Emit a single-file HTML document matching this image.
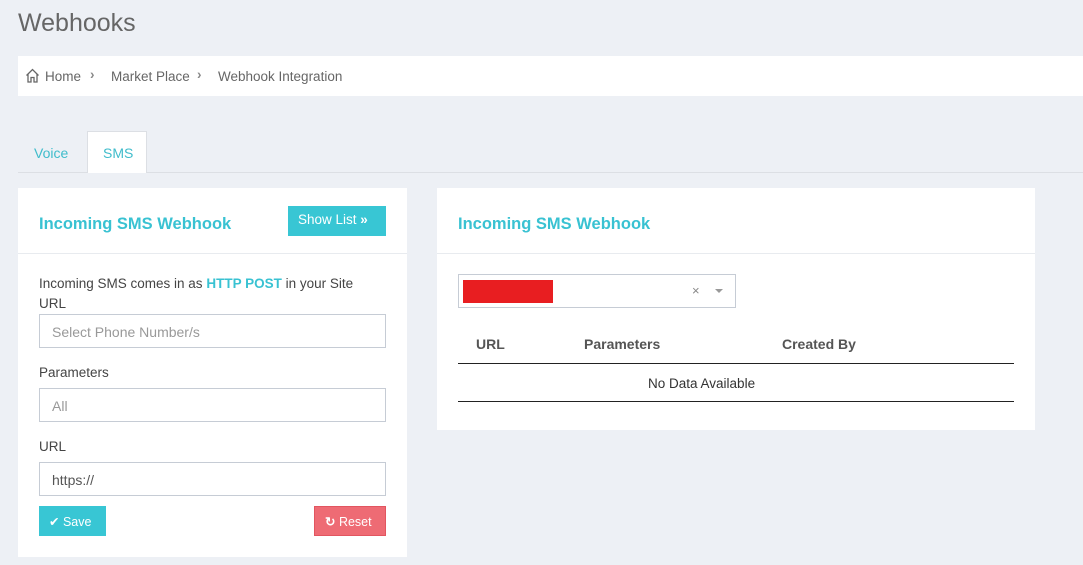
<!DOCTYPE html>
<html><head><style>
*{box-sizing:border-box;margin:0;padding:0}
body{width:1083px;height:565px;background:#edf0f5;font-family:"Liberation Sans",sans-serif;position:relative;overflow:hidden;color:#444}
.a{position:absolute}
.t{font-size:13.5px;color:#444}
.h{font-size:16.5px;font-weight:bold;color:#39c2d2}
.inp{position:absolute;left:39px;width:347px;height:34px;border:1px solid #c6ccd5;background:#fff;font-size:14px;padding:9px 12px;color:#999}
.th{font-size:14px;font-weight:bold;color:#555}
</style></head><body>
<div class="a" style="left:18px;top:9px;font-size:25px;color:#666">Webhooks</div>
<div class="a" style="left:18px;top:56px;width:1065px;height:40px;background:#fff"></div>
<svg class="a" style="left:25px;top:68px" width="15" height="15" viewBox="0 0 15 15"><path d="M1.5 7.5 L7.5 1.5 L13.5 7.5 M3 6 V14 H6 V9.5 H9 V14 H12 V6" fill="none" stroke="#666" stroke-width="1.3"/></svg>
<div class="a t" style="left:45px;top:69px;color:#666">Home</div>
<div class="a t" style="left:90px;top:67px;color:#888;font-weight:bold">›</div>
<div class="a t" style="left:111px;top:69px;color:#666">Market Place</div>
<div class="a t" style="left:197px;top:67px;color:#888;font-weight:bold">›</div>
<div class="a t" style="left:218px;top:69px;color:#666">Webhook Integration</div>
<div class="a" style="left:18px;top:172px;width:1065px;height:1px;background:#dcdfe4"></div>
<div class="a" style="left:87px;top:131px;width:60px;height:42px;background:#fff;border:1px solid #dcdfe4;border-bottom:none"></div>
<div class="a" style="left:34px;top:145px;font-size:14px;color:#3fbccb">Voice</div>
<div class="a" style="left:103px;top:145px;font-size:14px;color:#3fbccb">SMS</div>

<div class="a" style="left:18px;top:188px;width:389px;height:369px;background:#fff"></div>
<div class="a" style="left:18px;top:253px;width:389px;height:1px;background:#e8ebef"></div>
<div class="a h" style="left:39px;top:215px">Incoming SMS Webhook</div>
<div class="a" style="left:288px;top:206px;width:98px;height:30px;background:#38c6d4;color:#fff;font-size:13.5px;padding:6px 0 0 10px">Show List <b>»</b></div>
<div class="a t" style="left:39px;top:276px">Incoming SMS comes in as <b style="color:#39c2d2">HTTP POST</b> in your Site</div>
<div class="a t" style="left:39px;top:296px">URL</div>
<div class="inp" style="top:314px">Select Phone Number/s</div>
<div class="a t" style="left:39px;top:365px">Parameters</div>
<div class="inp" style="top:388px">All</div>
<div class="a t" style="left:39px;top:439px">URL</div>
<div class="inp" style="top:462px;color:#555">https://</div>
<div class="a" style="left:39px;top:506px;width:67px;height:30px;background:#38c6d4;color:#fff;font-size:12.5px;padding:8px 0 0 10px">✔ Save</div>
<div class="a" style="left:314px;top:506px;width:72px;height:30px;background:#ee6b74;border:1px solid #e25560;color:#fff;font-size:12.5px;padding:7px 0 0 10px"><b>↻</b> Reset</div>

<div class="a" style="left:437px;top:188px;width:598px;height:242px;background:#fff"></div>
<div class="a" style="left:437px;top:253px;width:598px;height:1px;background:#e8ebef"></div>
<div class="a h" style="left:458px;top:215px">Incoming SMS Webhook</div>
<div class="a" style="left:458px;top:274px;width:278px;height:34px;border:1px solid #c6ccd5"></div>
<div class="a" style="left:463px;top:280px;width:90px;height:23px;background:#e81e21"></div>
<div class="a" style="left:692px;top:283px;font-size:13px;color:#888">×</div>
<div class="a" style="left:715px;top:289px;border:4px solid transparent;border-top:4px solid #999;border-bottom:none"></div>
<div class="a th" style="left:476px;top:336px">URL</div>
<div class="a th" style="left:584px;top:336px">Parameters</div>
<div class="a th" style="left:782px;top:336px">Created By</div>
<div class="a" style="left:458px;top:363px;width:556px;height:1px;background:#222"></div>
<div class="a t" style="left:648px;top:376px;color:#333">No Data Available</div>
<div class="a" style="left:458px;top:401px;width:556px;height:1px;background:#222"></div>
</body></html>
